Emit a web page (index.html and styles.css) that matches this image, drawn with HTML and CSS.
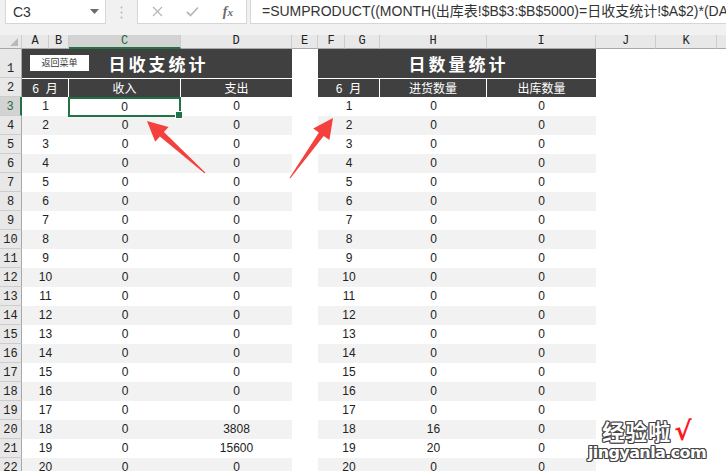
FILE: index.html
```html
<!DOCTYPE html>
<html lang="zh-CN">
<head>
<meta charset="utf-8">
<title>日收支统计</title>
<link rel="stylesheet" href="styles.css">
</head>
<body>
<div class="topbar">
  <div class="namebox"><span>C3</span>
    <svg class="dd" width="9" height="6" viewBox="0 0 9 6"><path d="M0 0h9L4.5 5z" fill="#6b6b6b"/></svg>
  </div>
  <div class="dots">
    <svg width="3" height="13" viewBox="0 0 3 13"><circle cx="1.5" cy="1.5" r="1" fill="#b5b5b5"/><circle cx="1.5" cy="6.5" r="1" fill="#b5b5b5"/><circle cx="1.5" cy="11.5" r="1" fill="#b5b5b5"/></svg>
  </div>
  <div class="fxbox">
    <svg width="11" height="11" viewBox="0 0 11 11"><path d="M1 1L10 10M10 1L1 10" stroke="#b8b8b8" stroke-width="1.3"/></svg>
    <svg width="13" height="11" viewBox="0 0 13 11"><path d="M1 6L4.5 9.5L12 1.5" stroke="#b8b8b8" stroke-width="1.8" fill="none"/></svg>
    <span class="fx">f<i>x</i></span>
  </div>
  <div class="formula">=SUMPRODUCT((MONTH(出库表!$B$3:$B$5000)=日收支统计!$A$2)*(DAY(出库表!$B$3:$B$5000)=A3)*出库表!$F$3:$F$5000)</div>
</div>

<div class="sheet">
  <div class="row">
    <div class="ch corner"><span class="tri"></span></div>
    <div class="ch">A</div><div class="ch">B</div><div class="ch sel">C</div><div class="ch">D</div><div class="ch">E</div><div class="ch">F</div><div class="ch">G</div><div class="ch">H</div><div class="ch">I</div><div class="ch">J</div><div class="ch">K</div><div class="ch last"></div>
  </div>

  <div class="row">
    <div class="rh">1</div>
    <div class="title left"><span class="btn">返回菜单</span><span class="ttl">日收支统计</span></div>
    <div class="blank"></div>
    <div class="title right"><span class="ttl">日数量统计</span></div>
    <div class="blank rest"></div>
  </div>

  <div class="row">
    <div class="rh">2</div>
    <div class="hd day sep"><span>6</span><span>月</span></div><div class="hd sep">收入</div><div class="hd">支出</div>
    <div class="blank"></div>
    <div class="hd day sep"><span>6</span><span>月</span></div><div class="hd sep">进货数量</div><div class="hd">出库数量</div>
    <div class="blank rest"></div>
  </div>

  <div class="row"><div class="rh rsel">3</div><div class="c day">1</div><div class="c cur">0</div><div class="c">0</div><div class="blank"></div><div class="c day">1</div><div class="c">0</div><div class="c">0</div><div class="blank rest"></div></div>
  <div class="row alt"><div class="rh">4</div><div class="c day">2</div><div class="c">0</div><div class="c">0</div><div class="blank"></div><div class="c day">2</div><div class="c">0</div><div class="c">0</div><div class="blank rest"></div></div>
  <div class="row"><div class="rh">5</div><div class="c day">3</div><div class="c">0</div><div class="c">0</div><div class="blank"></div><div class="c day">3</div><div class="c">0</div><div class="c">0</div><div class="blank rest"></div></div>
  <div class="row alt"><div class="rh">6</div><div class="c day">4</div><div class="c">0</div><div class="c">0</div><div class="blank"></div><div class="c day">4</div><div class="c">0</div><div class="c">0</div><div class="blank rest"></div></div>
  <div class="row"><div class="rh">7</div><div class="c day">5</div><div class="c">0</div><div class="c">0</div><div class="blank"></div><div class="c day">5</div><div class="c">0</div><div class="c">0</div><div class="blank rest"></div></div>
  <div class="row alt"><div class="rh">8</div><div class="c day">6</div><div class="c">0</div><div class="c">0</div><div class="blank"></div><div class="c day">6</div><div class="c">0</div><div class="c">0</div><div class="blank rest"></div></div>
  <div class="row"><div class="rh">9</div><div class="c day">7</div><div class="c">0</div><div class="c">0</div><div class="blank"></div><div class="c day">7</div><div class="c">0</div><div class="c">0</div><div class="blank rest"></div></div>
  <div class="row alt"><div class="rh">10</div><div class="c day">8</div><div class="c">0</div><div class="c">0</div><div class="blank"></div><div class="c day">8</div><div class="c">0</div><div class="c">0</div><div class="blank rest"></div></div>
  <div class="row"><div class="rh">11</div><div class="c day">9</div><div class="c">0</div><div class="c">0</div><div class="blank"></div><div class="c day">9</div><div class="c">0</div><div class="c">0</div><div class="blank rest"></div></div>
  <div class="row alt"><div class="rh">12</div><div class="c day">10</div><div class="c">0</div><div class="c">0</div><div class="blank"></div><div class="c day">10</div><div class="c">0</div><div class="c">0</div><div class="blank rest"></div></div>
  <div class="row"><div class="rh">13</div><div class="c day">11</div><div class="c">0</div><div class="c">0</div><div class="blank"></div><div class="c day">11</div><div class="c">0</div><div class="c">0</div><div class="blank rest"></div></div>
  <div class="row alt"><div class="rh">14</div><div class="c day">12</div><div class="c">0</div><div class="c">0</div><div class="blank"></div><div class="c day">12</div><div class="c">0</div><div class="c">0</div><div class="blank rest"></div></div>
  <div class="row"><div class="rh">15</div><div class="c day">13</div><div class="c">0</div><div class="c">0</div><div class="blank"></div><div class="c day">13</div><div class="c">0</div><div class="c">0</div><div class="blank rest"></div></div>
  <div class="row alt"><div class="rh">16</div><div class="c day">14</div><div class="c">0</div><div class="c">0</div><div class="blank"></div><div class="c day">14</div><div class="c">0</div><div class="c">0</div><div class="blank rest"></div></div>
  <div class="row"><div class="rh">17</div><div class="c day">15</div><div class="c">0</div><div class="c">0</div><div class="blank"></div><div class="c day">15</div><div class="c">0</div><div class="c">0</div><div class="blank rest"></div></div>
  <div class="row alt"><div class="rh">18</div><div class="c day">16</div><div class="c">0</div><div class="c">0</div><div class="blank"></div><div class="c day">16</div><div class="c">0</div><div class="c">0</div><div class="blank rest"></div></div>
  <div class="row"><div class="rh">19</div><div class="c day">17</div><div class="c">0</div><div class="c">0</div><div class="blank"></div><div class="c day">17</div><div class="c">0</div><div class="c">0</div><div class="blank rest"></div></div>
  <div class="row alt"><div class="rh">20</div><div class="c day">18</div><div class="c">0</div><div class="c">3808</div><div class="blank"></div><div class="c day">18</div><div class="c">16</div><div class="c">0</div><div class="blank rest"></div></div>
  <div class="row"><div class="rh">21</div><div class="c day">19</div><div class="c">0</div><div class="c">15600</div><div class="blank"></div><div class="c day">19</div><div class="c">20</div><div class="c">0</div><div class="blank rest"></div></div>
  <div class="row alt"><div class="rh">22</div><div class="c day">20</div><div class="c">0</div><div class="c">0</div><div class="blank"></div><div class="c day">20</div><div class="c">0</div><div class="c">0</div><div class="blank rest"></div></div>
</div>

<svg class="arrows" width="726" height="471" viewBox="0 0 726 471">
  <polygon fill="#f4413d" points="147,121 168.6,126.9 163.9,132.1 205.3,172.6 204.7,173.4 159.9,136.5 155.2,141.7"/>
  <polygon fill="#f4413d" points="333,118 329.4,140.1 323.7,136 290.4,178.3 289.6,177.7 318.9,132.6 313.2,128.5"/>
</svg>

<div class="watermark">
  <div class="wm1"><span class="cn">经验啦</span><span class="ck">√</span></div>
  <div class="wm2">jingyanla.com</div>
</div>
</body>
</html>
```

FILE: styles.css
```css
* { box-sizing: border-box; }
html, body { margin: 0; padding: 0; }
body {
  width: 726px;
  height: 471px;
  overflow: hidden;
  position: relative;
  background: #ffffff;
  font-family: "Liberation Sans", "Noto Sans CJK SC", sans-serif;
  color: #222;
}

/* formula bar */
.topbar {
  height: 35px;
  background: #f1f1f1;
  display: flex;
  align-items: flex-start;
  padding-left: 5px;
}
.namebox {
  width: 101px;
  height: 24px;
  background: #fff;
  border: 1px solid #d6d6d6;
  border-top: none;
  display: flex;
  align-items: center;
  justify-content: space-between;
  padding: 0 6px 0 7px;
  font-size: 14px;
  color: #333;
}
.dots {
  width: 31px;
  height: 24px;
  display: flex;
  align-items: center;
  justify-content: center;
}
.fxbox {
  width: 110px;
  height: 24px;
  background: #fff;
  border: 1px solid #d6d6d6;
  border-top: none;
  display: flex;
  align-items: center;
  justify-content: space-between;
  padding: 0 13px 0 14px;
}
.fx {
  font-family: "Liberation Serif", serif;
  font-style: italic;
  font-size: 14px;
  color: #6a6a6a;
  font-weight: bold;
}
.fx i { font-size: 11px; }
.formula {
  margin-left: 3px;
  flex: 1;
  height: 24px;
  background: #fff;
  border-left: 1px solid #d6d6d6;
  border-bottom: 1px solid #d6d6d6;
  padding-left: 11px;
  font-size: 14px;
  line-height: 22px;
  color: #333;
  white-space: nowrap;
  overflow: hidden;
}

/* sheet grid */
.sheet {
  display: grid;
  grid-template-columns: 22px 27px 20px 112px 111px 26px 27px 35px 107px 109px 60px 61px 1fr;
  grid-template-rows: 14px 29px 19px;
  grid-auto-rows: 19px;
}
.row { display: contents; }

.ch {
  background: #e8e8e8;
  border-right: 1px solid #cdcdcd;
  border-bottom: 1px solid #a8a8a8;
  font-family: "Liberation Mono", monospace;
  font-size: 12px;
  line-height: 13px;
  text-align: center;
  color: #222;
}
.ch.sel {
  background: #d3d3d3;
  border-bottom: 2px solid #217346;
  color: #1e6b3f;
}
.ch.last { border-right: none; }
.corner { position: relative; }
.tri {
  position: absolute;
  right: 3px;
  bottom: 2px;
  width: 0;
  height: 0;
  border-left: 8px solid transparent;
  border-bottom: 8px solid #b9b9b9;
}

.rh {
  background: #e8e8e8;
  border-right: 1px solid #a8a8a8;
  border-bottom: 1px solid #cdcdcd;
  font-family: "Liberation Mono", monospace;
  font-size: 12px;
  display: flex;
  align-items: flex-end;
  justify-content: center;
  padding-bottom: 1px;
  line-height: 13px;
  color: #222;
}
.rh.rsel {
  background: #d3d3d3;
  border-right: 2px solid #217346;
  color: #1e6b3f;
}

.title {
  background: #404040;
  display: flex;
  align-items: center;
  justify-content: center;
  position: relative;
}
.title.left { grid-column: span 4; }
.title.right { grid-column: span 4; }
.ttl {
  color: #fff;
  font-family: "Noto Sans CJK SC", sans-serif;
  font-weight: bold;
  font-size: 17px;
  letter-spacing: 3px;
  padding-left: 3px;
  line-height: 20px;
}
.btn {
  position: absolute;
  left: 8px;
  top: 6px;
  width: 59px;
  height: 16px;
  background: #fff;
  font-family: "Noto Sans CJK SC", sans-serif;
  font-size: 9px;
  line-height: 16px;
  text-align: center;
  color: #333;
}

.hd {
  background: #404040;
  border-top: 1px solid #fff;
  color: #fff;
  font-family: "Noto Sans CJK SC", sans-serif;
  font-size: 12px;
  display: flex;
  align-items: center;
  justify-content: center;
  gap: 7px;
  line-height: 16px;
}
.hd.sep { border-right: 1px solid #fff; }

.blank { background: #fff; }
.rest { grid-column: span 3; }
.day { grid-column: span 2; }

.c {
  font-size: 12px;
  display: flex;
  align-items: center;
  justify-content: center;
  padding-bottom: 1px;
  color: #222;
  background: #fff;
}
.alt .c { background: #f2f2f2; }
.c.cur {
  position: relative;
  border: 2px solid #217346;
  margin: 0 0 -1px -1px;
}
.c.cur::after {
  content: "";
  position: absolute;
  right: -4px;
  bottom: -4px;
  width: 6px;
  height: 6px;
  background: #217346;
  border: 1px solid #fff;
}

.arrows {
  position: absolute;
  left: 0;
  top: 0;
  pointer-events: none;
}

.watermark {
  position: absolute;
  left: 584px;
  top: 416px;
  width: 126px;
  text-align: center;
  font-family: "Noto Sans CJK SC", "Liberation Sans", sans-serif;
  font-weight: bold;
  color: #fff;
}
.wm1 { line-height: 28px; height: 28px; }
.cn {
  font-size: 22px;
  text-shadow: -1px -1px 0 #444, 1px -1px 0 #444, -1px 1px 0 #444, 1px 1px 0 #444, 0 1px 0 #444, 0 -1px 0 #444, 1px 0 0 #444, -1px 0 0 #444;
  letter-spacing: 1px;
}
.ck {
  color: #ff1a1a;
  font-size: 26px;
  margin-left: 3px;
  font-family: "DejaVu Sans", sans-serif;
}
.wm2 {
  font-family: "DejaVu Sans", sans-serif;
  font-size: 16px;
  line-height: 18px;
  letter-spacing: -0.6px;
  text-shadow: -1px -1px 0 #444, 1px -1px 0 #444, -1px 1px 0 #444, 1px 1px 0 #444, 0 1px 0 #444, 0 -1px 0 #444, 1px 0 0 #444, -1px 0 0 #444;
}
```
